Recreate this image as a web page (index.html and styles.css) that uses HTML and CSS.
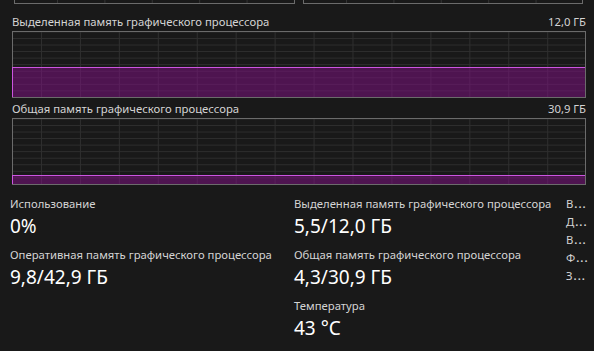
FILE: index.html
```html
<!DOCTYPE html>
<html lang="ru">
<head>
    <meta charset="UTF-8">
    <title>GPU</title>
    <link rel="stylesheet" href="styles.css">
</head>
<body>

<div class="mini-row">
    <div class="mini-graph"></div>
    <div class="mini-graph"></div>
</div>

<div class="graph-head first">
    <span>Выделенная память графического процессора</span>
    <span>12,0 ГБ</span>
</div>
<div class="graph">
    <div class="fill" style="height: 45.8%"></div>
</div>

<div class="graph-head">
    <span>Общая память графического процессора</span>
    <span>30,9 ГБ</span>
</div>
<div class="graph">
    <div class="fill" style="height: 13.9%"></div>
</div>

<div class="stats">
    <div class="col col-left">
        <div class="stat">
            <div class="stat-label">Использование</div>
            <div class="stat-value">0%</div>
        </div>
        <div class="stat">
            <div class="stat-label">Оперативная память графического процессора</div>
            <div class="stat-value">9,8/42,9 ГБ</div>
        </div>
    </div>
    <div class="col col-mid">
        <div class="stat">
            <div class="stat-label">Выделенная память графического процессора</div>
            <div class="stat-value">5,5/12,0 ГБ</div>
        </div>
        <div class="stat">
            <div class="stat-label">Общая память графического процессора</div>
            <div class="stat-value">4,3/30,9 ГБ</div>
        </div>
        <div class="stat">
            <div class="stat-label">Температура</div>
            <div class="stat-value">43 °C</div>
        </div>
    </div>
    <div class="col col-right">
        <div class="info" title="Версия драйвера">В<span class="dots">...</span></div>
        <div class="info" title="Дата разработки">Д<span class="dots">...</span></div>
        <div class="info" title="Версия DirectX">В<span class="dots">...</span></div>
        <div class="info" title="Физическое расположение">Ф<span class="dots">...</span></div>
        <div class="info" title="Зарезервированная память">З<span class="dots">...</span></div>
    </div>
</div>

</body>
</html>
```

FILE: styles.css
```css
body {
    margin: 0;
    padding: 0 8px 0 12px;
    background-color: #191919;
    color: #d4d4d4;
    font-family: "Noto Sans", "Open Sans", sans-serif;
    font-size: 11.3px;
    line-height: 18px;
    overflow: hidden;
}

/* нижний край маленьких графиков сверху */
.mini-row {
    display: flex;
    gap: 8px;
    padding: 0 3px 0 2px;
}

.mini-graph {
    flex: 1;
    height: 3px;
    border: 1px solid #6b6b6b;
    border-top: none;
    background-image: linear-gradient(to right, #333 1px, transparent 1px);
    background-size: 47.4px 100%;
    background-position: 42px 0;
}

.graph-head {
    display: flex;
    justify-content: space-between;
    margin-top: 2px;
    height: 18px;
}

.graph-head.first {
    margin-top: 9px;
}

.graph {
    position: relative;
    box-sizing: border-box;
    height: 67px;
    border: 1px solid #6b6b6b;
    background-image:
        linear-gradient(to right, #2e2e2e 1px, transparent 1px),
        linear-gradient(to bottom, #2e2e2e 1px, transparent 1px);
    background-size: 38.95px 100%, 100% 6.55px;
    background-position: 28px 0, 0 6px;
}

.fill {
    position: absolute;
    left: -1px;
    right: 0;
    bottom: 0;
    box-sizing: border-box;
    border-top: 1px solid #cc55e0;
    border-left: 1px solid #cc55e0;
    background-color: rgba(135, 15, 140, 0.48);
}

.stats {
    display: flex;
    margin-top: 10px;
    margin-left: -2px;
}

.col {
    flex-shrink: 0;
}

.col-left {
    width: 284px;
}

.col-mid {
    width: 272px;
}

.col-right {
    width: 22px;
}

.stat {
    margin-bottom: 7px;
}

.stat-label {
    white-space: nowrap;
}

.stat-value {
    color: #ffffff;
    font-size: 19px;
    line-height: 26px;
    white-space: nowrap;
}

.info {
    white-space: nowrap;
}

.dots {
    margin-left: 1px;
    letter-spacing: 1px;
    font-weight: 600;
}
```
